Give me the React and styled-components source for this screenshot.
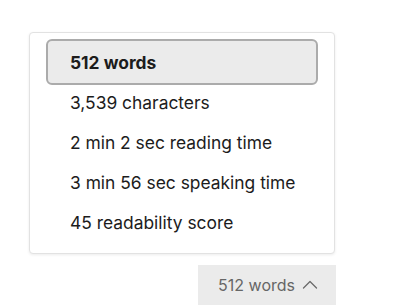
import styled, { createGlobalStyle } from "styled-components";

const GlobalStyle = createGlobalStyle`
  html, body {
    margin: 0;
    background: #ffffff;
    font-family: Inter, "Noto Sans", sans-serif;
  }
`;

const stats = [
  "512 words",
  "3,539 characters",
  "2 min 2 sec reading time",
  "3 min 56 sec speaking time",
  "45 readability score",
];

function App() {
  return (
    <>
      <GlobalStyle />
      <Page>
        <Stack>
          <Menu>
            {stats.map((s, i) => (
              <Item key={s} $active={i === 0}>
                {s}
              </Item>
            ))}
          </Menu>
          <Toggle>
            512 words
            <svg width="16" height="16" viewBox="0 0 16 16" fill="none">
              <path
                d="M1.5 11 L8 4.5 L14.5 11"
                stroke="#6b6b6b"
                strokeWidth="1.3"
                strokeLinecap="round"
                strokeLinejoin="round"
              />
            </svg>
          </Toggle>
        </Stack>
      </Page>
    </>
  );
}

export default App;

const Page = styled.div`
  padding: 32px 0 0 29px;
`;

const Stack = styled.div`
  display: inline-flex;
  flex-direction: column;
  align-items: flex-end;
  gap: 11px;
`;

const Menu = styled.div`
  width: 306px;
  box-sizing: border-box;
  border: 1px solid #e2e2e2;
  border-radius: 4px;
  box-shadow: 0 1px 3px rgba(0, 0, 0, 0.08);
  background: #fff;
  padding: 9px 16px 11px;
  display: flex;
  flex-direction: column;
`;

const Item = styled.div`
  box-sizing: border-box;
  display: flex;
  align-items: center;
  font-size: 17.4px;
  color: #1c1c1c;
  height: ${(p) => (p.$active ? "46px" : "40px")};
  margin: ${(p) => (p.$active ? "-3px 0" : "0")};
  padding-left: ${(p) => (p.$active ? "22px" : "24px")};
  font-weight: ${(p) => (p.$active ? 700 : 400)};
  background: ${(p) => (p.$active ? "#ebebeb" : "transparent")};
  border: ${(p) => (p.$active ? "2px solid #ababab" : "none")};
  border-radius: 6px;
`;

const Toggle = styled.button`
  display: flex;
  align-items: center;
  gap: 7px;
  height: 40px;
  padding: 0 18px 0 20px;
  margin-right: -1px;
  border: 0;
  background: #ebebeb;
  color: #666666;
  font-family: Inter, "Noto Sans", sans-serif;
  font-size: 16px;
`;
